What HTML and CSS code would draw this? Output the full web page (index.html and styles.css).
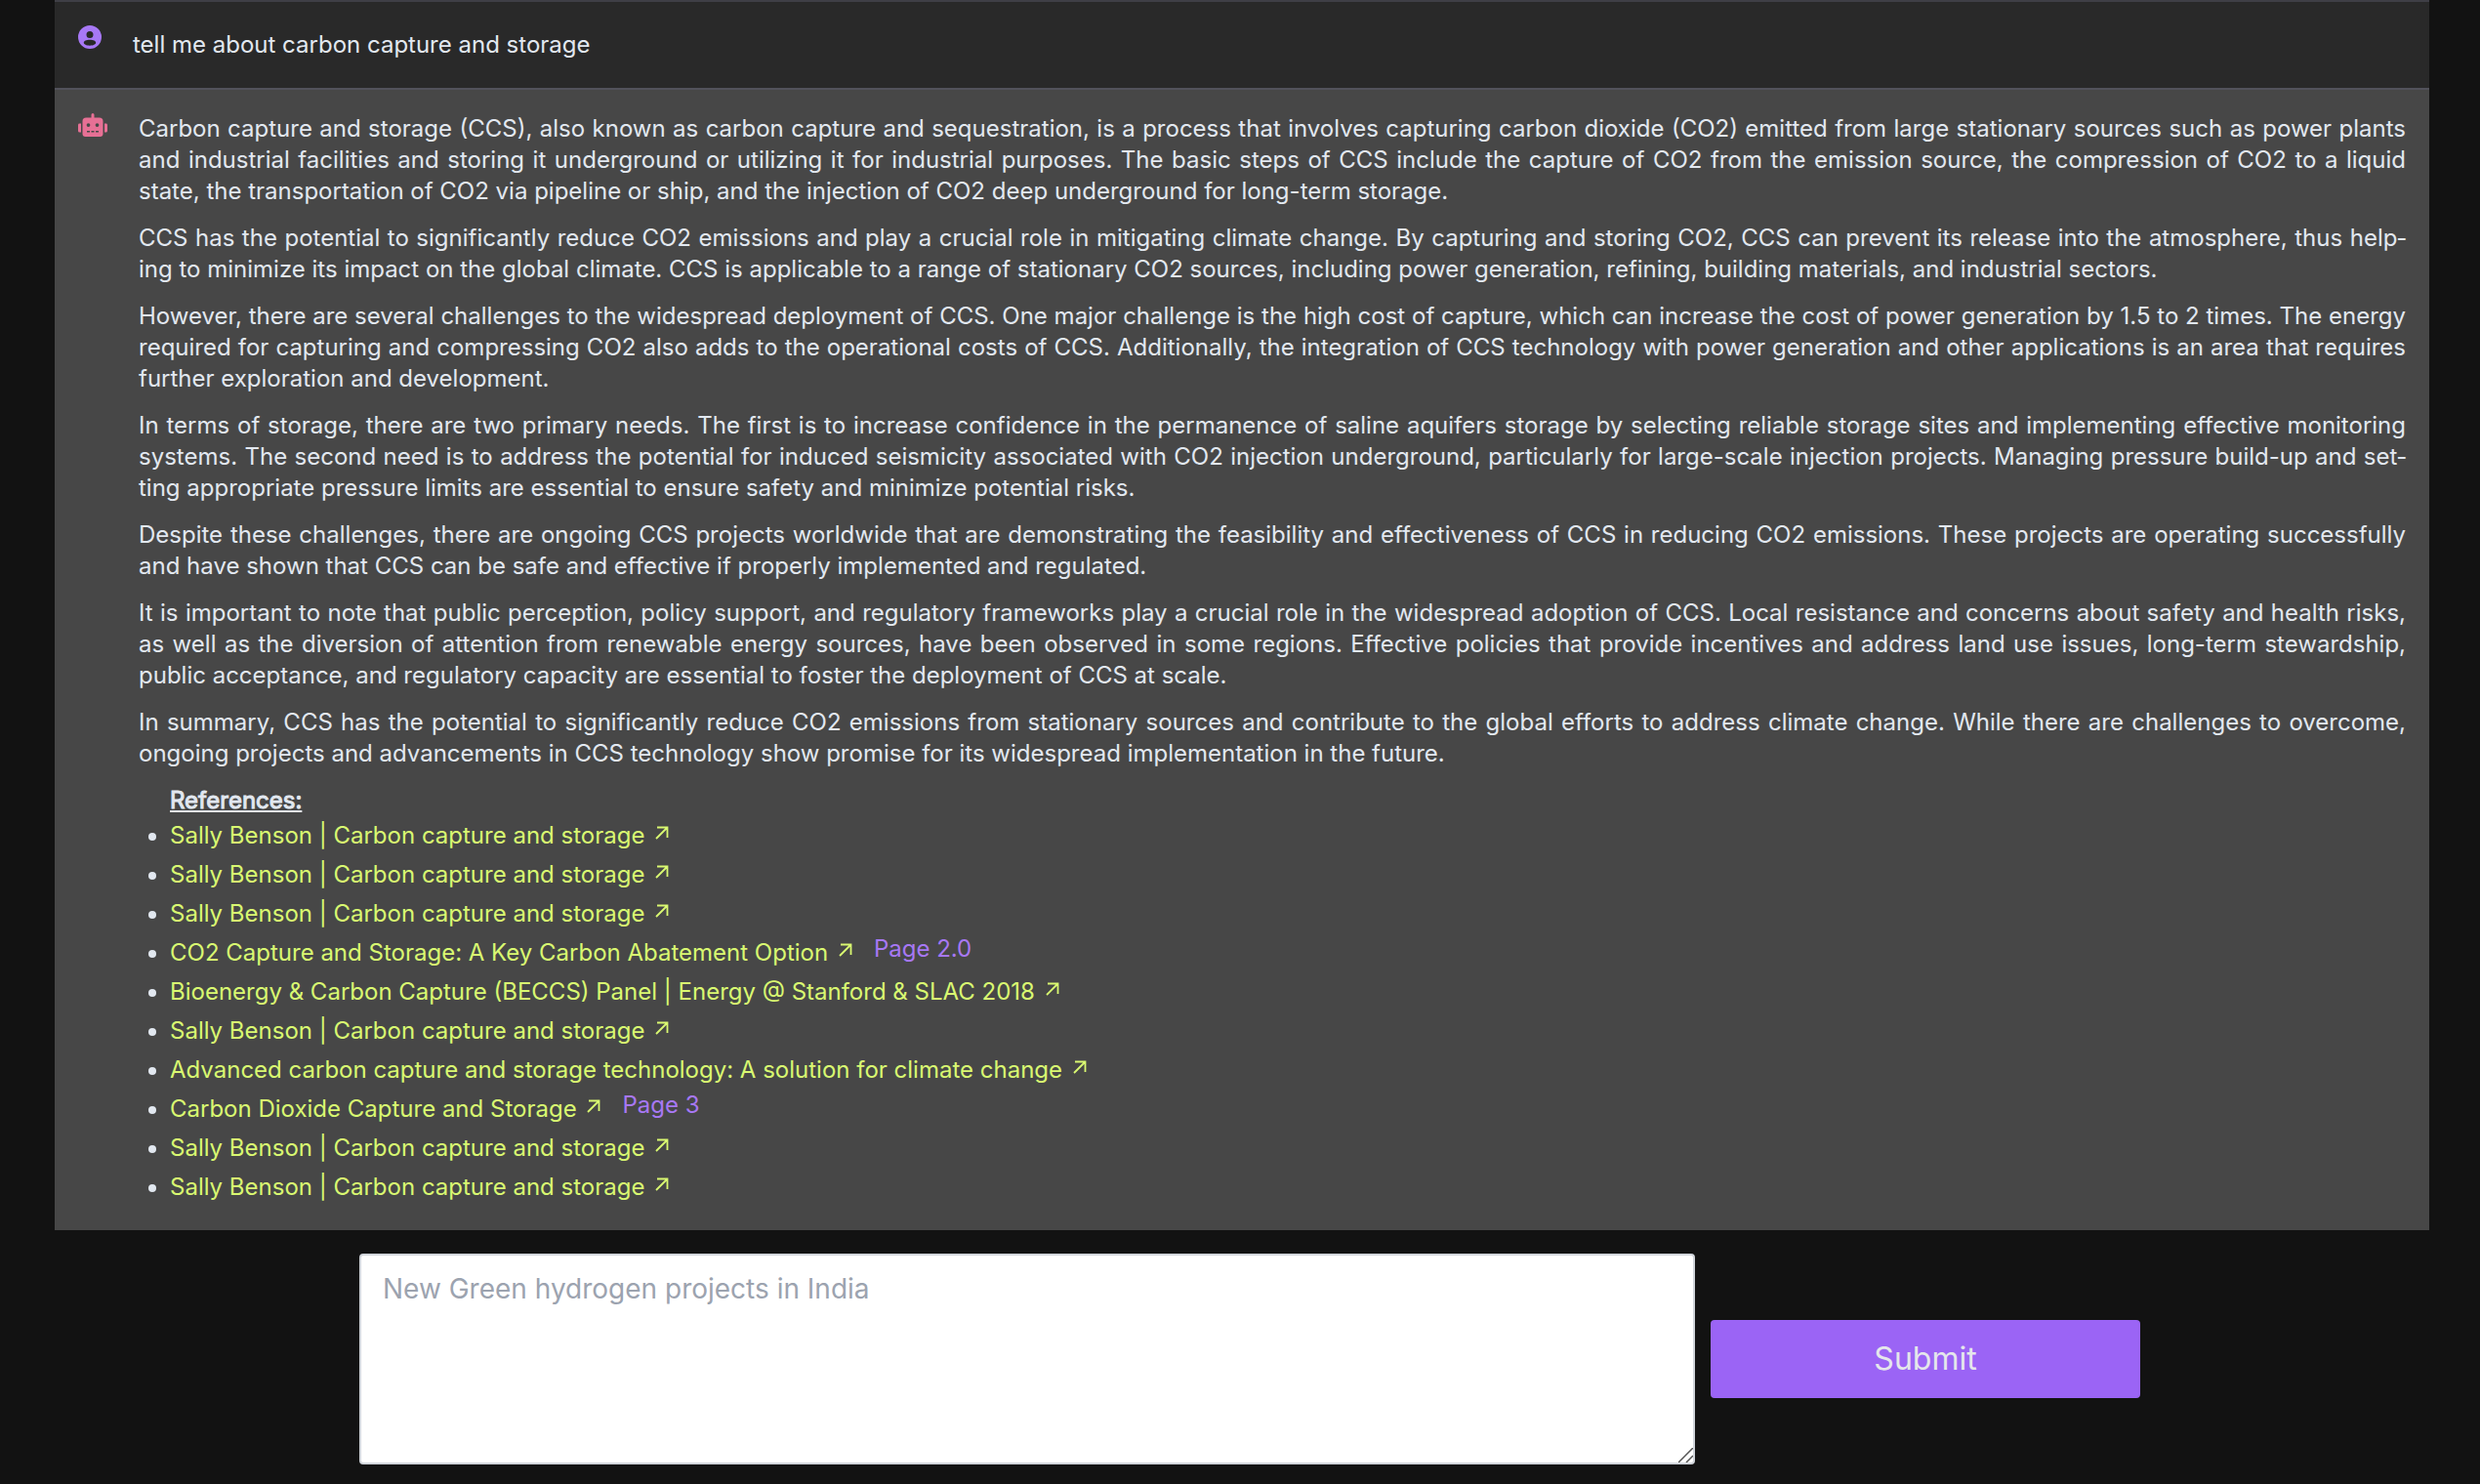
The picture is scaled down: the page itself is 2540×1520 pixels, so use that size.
FILE: index.html
```html
<!DOCTYPE html>
<html lang="en">
<head>
<meta charset="utf-8">
<meta name="viewport" content="width=device-width, initial-scale=1">
<title>Chat</title>
<link rel="stylesheet" href="styles.css">
</head>
<body>
<svg class="sprite" aria-hidden="true">
  <symbol id="arrow" viewBox="0 0 14 14"><path d="M2 1.500H12.500V12M12.500 1.500L1 13" fill="none" stroke="currentColor" stroke-width="1.800"/></symbol>
</svg>
<main class="chat">
  <section class="message message-user">
    <svg class="avatar avatar-user" viewBox="0 0 24 24" role="img" aria-label="You"><path fill="currentColor" fill-rule="evenodd" d="M12 0a12 12 0 1 0 0 24a12 12 0 0 0 0-24ZM12 6a3.500 3.500 0 1 1 0 7a3.500 3.500 0 0 1 0-7ZM12 14.800c3.600 0 6.200 1.300 6.200 3c0 1.600-2.600 2.900-6.200 2.900s-6.200-1.300-6.200-2.900c0-1.700 2.600-3 6.200-3Z"/></svg>
    <p class="question">tell me about carbon capture and storage</p>
  </section>
  <section class="message message-bot">
    <svg class="avatar avatar-bot" viewBox="0 0 640 512" role="img" aria-label="Assistant"><path fill="currentColor" d="M32,224H64V416H32A31.96166,31.96166,0,0,1,0,384V256A31.96166,31.96166,0,0,1,32,224Zm512-48V448a64.06328,64.06328,0,0,1-64,64H160a64.06328,64.06328,0,0,1-64-64V176a79.974,79.974,0,0,1,80-80H288V32a32,32,0,0,1,64,0V96H464A79.974,79.974,0,0,1,544,176ZM264,256a40,40,0,1,0-40,40A39.997,39.997,0,0,0,264,256Zm-8,128H192v32h64Zm96,0H288v32h64ZM456,256a40,40,0,1,0-40,40A39.997,39.997,0,0,0,456,256Zm-8,128H384v32h64ZM640,256V384a31.96166,31.96166,0,0,1-32,32H576V224h32A31.96166,31.96166,0,0,1,640,256Z"/></svg>
    <div class="answer">
      <p>Carbon capture and storage (CCS), also known as carbon capture and sequestration, is a process that involves capturing carbon dioxide (CO2) emitted from large stationary sources such as power plants and industrial facilities and storing it underground or utilizing it for industrial purposes. The basic steps of CCS include the capture of CO2 from the emission source, the compression of CO2 to a liquid state, the transportation of CO2 via pipeline or ship, and the injection of CO2 deep underground for long-term storage.</p>
      <p>CCS has the potential to significantly reduce CO2 emissions and play a crucial role in mitigating climate change. By capturing and storing CO2, CCS can prevent its release into the atmosphere, thus help&shy;ing to minimize its impact on the global climate. CCS is applicable to a range of stationary CO2 sources, including power generation, refining, building materials, and industrial sectors.</p>
      <p>However, there are several challenges to the widespread deployment of CCS. One major challenge is the high cost of capture, which can increase the cost of power generation by 1.5 to 2 times. The energy required for capturing and compressing CO2 also adds to the operational costs of CCS. Additionally, the integration of CCS technology with power generation and other applications is an area that requires further exploration and development.</p>
      <p>In terms of storage, there are two primary needs. The first is to increase confidence in the permanence of saline aquifers storage by selecting reliable storage sites and implementing effective monitoring systems. The second need is to address the potential for induced seismicity associated with CO2 injection underground, particularly for large-scale injection projects. Managing pressure build-up and set&shy;ting appropriate pressure limits are essential to ensure safety and minimize potential risks.</p>
      <p>Despite these challenges, there are ongoing CCS projects worldwide that are demonstrating the feasibility and effectiveness of CCS in reducing CO2 emissions. These projects are operating successfully and have shown that CCS can be safe and effective if properly implemented and regulated.</p>
      <p>It is important to note that public perception, policy support, and regulatory frameworks play a crucial role in the widespread adoption of CCS. Local resistance and concerns about safety and health risks, as well as the diversion of attention from renewable energy sources, have been observed in some regions. Effective policies that provide incentives and address land use issues, long-term stewardship, public acceptance, and regulatory capacity are essential to foster the deployment of CCS at scale.</p>
      <p>In summary, CCS has the potential to significantly reduce CO2 emissions from stationary sources and contribute to the global efforts to address climate change. While there are challenges to overcome, ongoing projects and advancements in CCS technology show promise for its widespread implementation in the future.</p>
      <h2 class="references-title">References:</h2>
      <ul class="references">
        <li><a href="#">Sally Benson | Carbon capture and storage <svg class="arrow"><use href="#arrow"/></svg></a></li>
        <li><a href="#">Sally Benson | Carbon capture and storage <svg class="arrow"><use href="#arrow"/></svg></a></li>
        <li><a href="#">Sally Benson | Carbon capture and storage <svg class="arrow"><use href="#arrow"/></svg></a></li>
        <li><a href="#">CO2 Capture and Storage: A Key Carbon Abatement Option <svg class="arrow"><use href="#arrow"/></svg></a><span class="page">Page 2.0</span></li>
        <li><a href="#">Bioenergy &amp; Carbon Capture (BECCS) Panel | Energy @ Stanford &amp; SLAC 2018 <svg class="arrow"><use href="#arrow"/></svg></a></li>
        <li><a href="#">Sally Benson | Carbon capture and storage <svg class="arrow"><use href="#arrow"/></svg></a></li>
        <li><a href="#">Advanced carbon capture and storage technology: A solution for climate change <svg class="arrow"><use href="#arrow"/></svg></a></li>
        <li><a href="#">Carbon Dioxide Capture and Storage <svg class="arrow"><use href="#arrow"/></svg></a><span class="page">Page 3</span></li>
        <li><a href="#">Sally Benson | Carbon capture and storage <svg class="arrow"><use href="#arrow"/></svg></a></li>
        <li><a href="#">Sally Benson | Carbon capture and storage <svg class="arrow"><use href="#arrow"/></svg></a></li>
      </ul>
    </div>
  </section>
  <form class="composer">
    <textarea class="prompt" aria-label="Your question" placeholder="New Green hydrogen projects in India"></textarea>
    <button class="submit" type="button">Submit</button>
  </form>
</main>
</body>
</html>
```
FILE: styles.css
```css
* {
  box-sizing: border-box;
}

body {
  margin: 0;
  background: #121212;
  color: #e2e8f0;
  font-family: Inter, "Liberation Sans", sans-serif;
  font-size: 24px;
  line-height: 32px;
}

p,
h2,
ul {
  margin: 0;
}

.sprite {
  display: none;
}

.chat {
  padding: 0 52px 20px 56px;
}

.message {
  display: flex;
  align-items: flex-start;
  gap: 32px;
  padding: 24px;
  border-top: 2px solid #52525b;
}

.message-user {
  padding-bottom: 28px;
  background: #292929;
  border-color: #3f3f46;
}

.message-bot {
  background: #474747;
}

.avatar {
  flex: none;
  height: 24px;
}

.avatar-user {
  width: 24px;
  color: #a778f5;
}

.avatar-bot {
  width: 30px;
  color: #e77095;
}

.question {
  padding-top: 4px;
}

.answer {
  flex: 1;
}

.answer p {
  margin-bottom: 16px;
  text-align: justify;
}

.references-title {
  padding-left: 32px;
  font-size: 24px;
  font-weight: 400;
  -webkit-text-stroke: 1px currentColor;
  text-decoration: underline;
}

.references {
  padding-left: 32px;
}

.references li {
  height: 40px;
  line-height: 40px;
}

.references a {
  color: #d9f871;
  text-decoration: none;
}

.arrow {
  width: 14px;
  height: 14px;
  margin-left: 4px;
  vertical-align: 4px;
}

.page {
  margin-left: 22px;
  color: #a778f5;
  line-height: 32px;
  vertical-align: 4px;
}

.composer {
  display: flex;
  align-items: center;
  gap: 16px;
  width: 75%;
  margin: 24px 0 0 calc(12.5% + 8px);
}

.prompt {
  flex: none;
  width: 75%;
  height: 216px;
  padding: 16px 22px;
  border: 2px solid #d1d5db;
  border-radius: 4px;
  background: #fff;
  font: 28px/36px Inter, "Liberation Sans", sans-serif;
  resize: both;
}

.prompt::placeholder {
  color: #9ca3af;
}

.prompt::-webkit-resizer {
  background: url("data:image/svg+xml,%3Csvg xmlns='http://www.w3.org/2000/svg' width='15' height='15'%3E%3Cpath d='M0 15L15 0M8 15L15 8' stroke='%23555' stroke-width='1.500'/%3E%3C/svg%3E") no-repeat right bottom;
}

.submit {
  flex: 1;
  height: 80px;
  border: 0;
  border-radius: 4px;
  background: #9b64f5;
  color: #e5e7eb;
  font: 32px/48px Inter, "Liberation Sans", sans-serif;
}
```
